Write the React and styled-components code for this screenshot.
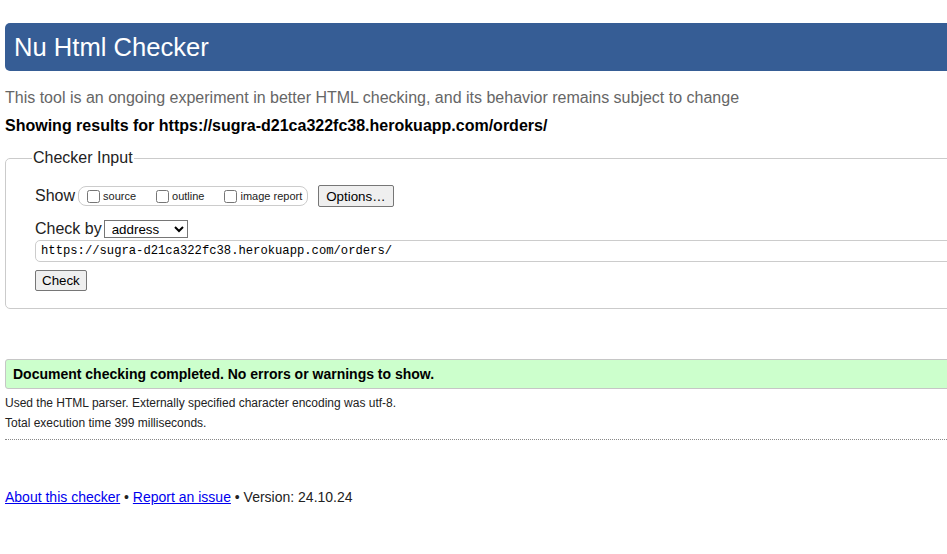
import styled, { createGlobalStyle } from "styled-components";

const GlobalStyle = createGlobalStyle`
  html, body {
    margin: 0;
    padding: 0;
    overflow-x: hidden;
    background: #fff;
  }
  body {
    font-family: "Liberation Sans", Arial, sans-serif;
    color: #000;
  }
`;

const Page = styled.div`
  width: 1010px;
  padding: 23px 0 40px 5px;
`;

const Header = styled.h1`
  margin: 0;
  height: 48px;
  line-height: 48px;
  padding-left: 9px;
  border-radius: 5px;
  background: #365d95;
  color: #fff;
  font-size: 25.6px;
  font-weight: normal;
`;

const Intro = styled.p`
  margin: 18px 0 0;
  font-size: 16px;
  color: #666;
`;

const ResultsFor = styled.p`
  margin: 10px 0 0;
  font-size: 16px;
  font-weight: bold;
`;

const Fieldset = styled.fieldset`
  margin: 14px 0 0;
  padding: 18px 0 17px 29px;
  border: 1px solid #cbcbcb;
  border-radius: 5px;
  min-width: 0;
`;

const Legend = styled.legend`
  margin-left: -3px;
  padding: 0 1px;
  font-size: 16px;
  color: #222;
`;

const Row = styled.div`
  display: flex;
  align-items: center;
  margin-top: ${(p) => p.$top || 0}px;
  font-size: 16px;
  color: #222;
`;

const RowLabel = styled.span`
  margin-right: ${(p) => p.$gap || 4}px;
`;

const ShowGroup = styled.span`
  display: inline-flex;
  align-items: center;
  height: 18px;
  padding: 0 5px 0 4px;
  border: 1px solid #ccc;
  border-radius: 8px;
`;

const CheckLabel = styled.label`
  display: inline-flex;
  align-items: center;
  font-size: 11px;
  color: #222;
  margin-right: ${(p) => (p.$last ? 0 : 16)}px;

  input {
    margin: 0 3px 0 4px;
    width: 13px;
    height: 13px;
  }
`;

const Button = styled.button`
  font-family: "Liberation Sans", Arial, sans-serif;
  font-size: 13.33px;
  color: #000;
  height: ${(p) => p.$h || 21}px;
  padding: 0 ${(p) => p.$pad || 6}px;
  margin-left: ${(p) => p.$left || 0}px;
  background: #efefef;
  border: 1px solid #767676;
  border-radius: 2px;
`;

const Select = styled.select`
  font-family: "Liberation Sans", Arial, sans-serif;
  font-size: 13.33px;
  width: 84px;
  height: 18px;
  padding: 0 0 0 3px;
  border: 1px solid #767676;
  border-radius: 0;
  background: #fff;
  color: #000;
`;

const UrlInput = styled.input`
  display: block;
  box-sizing: border-box;
  width: calc(100% - 10px);
  height: 22px;
  margin-top: 2px;
  padding: 0 5px;
  border: 1px solid #ccc;
  border-radius: 5px;
  font-family: "Liberation Mono", "DejaVu Sans Mono", monospace;
  font-size: 12.2px;
  color: #000;
`;

const CheckWrap = styled.div`
  margin-top: 8px;
`;

const Success = styled.div`
  margin-top: 50px;
  height: 28px;
  display: flex;
  align-items: center;
  padding-left: 7px;
  background: #ccffcc;
  border: 1px solid #c6c6c6;
  border-radius: 3px;
  font-size: 14px;
  font-weight: bold;
`;

const Note = styled.p`
  margin: ${(p) => p.$top}px 0 0;
  font-size: 12px;
  color: #222;
`;

const Dotted = styled.hr`
  margin: 9px 0 0;
  border: 0;
  border-top: 1px dotted #888;
  height: 0;
`;

const Footer = styled.p`
  margin: 49px 0 0;
  font-size: 14px;
  color: #222;

  a {
    color: #0000ee;
    text-decoration: underline;
  }
`;

export default function App() {
  return (
    <>
      <GlobalStyle />
      <Page>
        <Header>Nu Html Checker</Header>
        <Intro>
          This tool is an ongoing experiment in better HTML checking, and its
          behavior remains subject to change
        </Intro>
        <ResultsFor>
          Showing results for https://sugra-d21ca322fc38.herokuapp.com/orders/
        </ResultsFor>

        <Fieldset>
          <Legend>Checker Input</Legend>
          <Row>
            <RowLabel $gap={3}>Show</RowLabel>
            <ShowGroup>
              <CheckLabel>
                <input type="checkbox" />
                source
              </CheckLabel>
              <CheckLabel>
                <input type="checkbox" />
                outline
              </CheckLabel>
              <CheckLabel $last>
                <input type="checkbox" />
                image report
              </CheckLabel>
            </ShowGroup>
            <Button $left={10} $h={22} $pad={7}>
              Options…
            </Button>
          </Row>
          <Row $top={13}>
            <RowLabel $gap={2}>Check by</RowLabel>
            <Select defaultValue="address">
              <option value="address">address</option>
              <option value="file">file upload</option>
              <option value="text">text input</option>
            </Select>
          </Row>
          <UrlInput
            type="url"
            defaultValue="https://sugra-d21ca322fc38.herokuapp.com/orders/"
          />
          <CheckWrap>
            <Button>Check</Button>
          </CheckWrap>
        </Fieldset>

        <Success>
          Document checking completed. No errors or warnings to show.
        </Success>
        <Note $top={7}>
          Used the HTML parser. Externally specified character encoding was
          utf-8.
        </Note>
        <Note $top={6}>Total execution time 399 milliseconds.</Note>
        <Dotted />

        <Footer>
          <a href="#about">About this checker</a> •{" "}
          <a href="#issue">Report an issue</a> • Version: 24.10.24
        </Footer>
      </Page>
    </>
  );
}
